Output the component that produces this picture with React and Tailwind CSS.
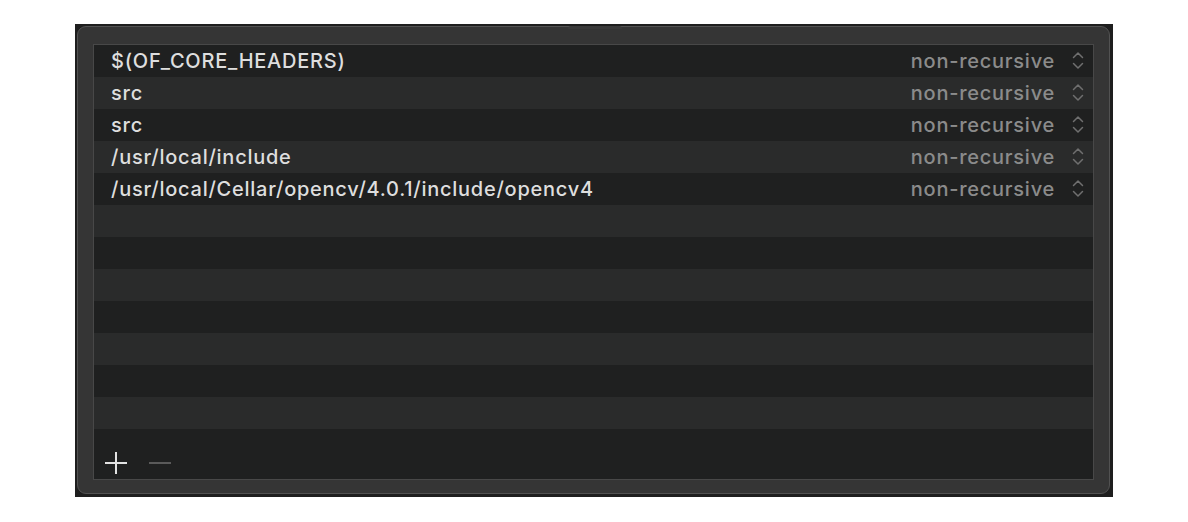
const PATHS = [
  '$(OF_CORE_HEADERS)',
  'src',
  'src',
  '/usr/local/include',
  '/usr/local/Cellar/opencv/4.0.1/include/opencv4',
]

const ROWS = 12

function Chevrons() {
  return (
    <svg width="12" height="19" viewBox="0 0 12 19" fill="none" stroke="#6f6f6f" strokeWidth="1.5" strokeLinecap="round" strokeLinejoin="round">
      <path d="M1.5 6.5 L6 2 L10.5 6.5" />
      <path d="M1.5 12.5 L6 17 L10.5 12.5" />
    </svg>
  )
}

export default function App() {
  const rows = Array.from({ length: ROWS }, (_, i) => PATHS[i] ?? null)

  return (
    <div className="w-[1188px] h-[522px] bg-white pt-[24px] pl-[75px]" style={{ fontFamily: 'Inter, "Liberation Sans", sans-serif' }}>
      <div className="w-[1038px] h-[473px] bg-[#1e1e1e] pl-[2px] pt-[2px] pr-[3px] pb-[3px]">
        <div className="relative h-full rounded-[9px] border border-[#525252] bg-[#353535] pt-[17px] px-[15px] pb-[14px]">
          <div className="absolute top-[-1px] left-[490px] w-[54px] h-[3px] rounded-t-[4px] bg-[#3a3a3a]" />
          <div className="border border-[#484848] flex flex-col">
            {rows.map((p, i) => (
              <div
                key={i}
                className={`h-[32px] flex items-center pl-[17px] pr-[9px] pb-[1px] ${i % 2 === 0 ? 'bg-[#1f2020]' : 'bg-[#2a2b2b]'}`}
              >
                {p && (
                  <>
                    <span className="flex-1 text-[20px] font-medium tracking-[0.75px] text-[#dedede]">{p}</span>
                    <span className="text-[20px] font-medium tracking-[0.75px] text-[#8b8b8b]">non-recursive</span>
                    <span className="ml-[17px] flex items-center"><Chevrons /></span>
                  </>
                )}
              </div>
            ))}
            <div className="h-[50px] bg-[#1f2020] flex items-end pl-[11px] pb-[5px] gap-[22px]">
              <svg width="22" height="22" viewBox="0 0 22 22" stroke="#e2e2e2" strokeWidth="2">
                <path d="M11 0 V22 M0 11 H22" />
              </svg>
              <svg width="22" height="22" viewBox="0 0 22 22" stroke="#5a5a5a" strokeWidth="2">
                <path d="M0 11 H22" />
              </svg>
            </div>
          </div>
        </div>
      </div>
    </div>
  )
}
